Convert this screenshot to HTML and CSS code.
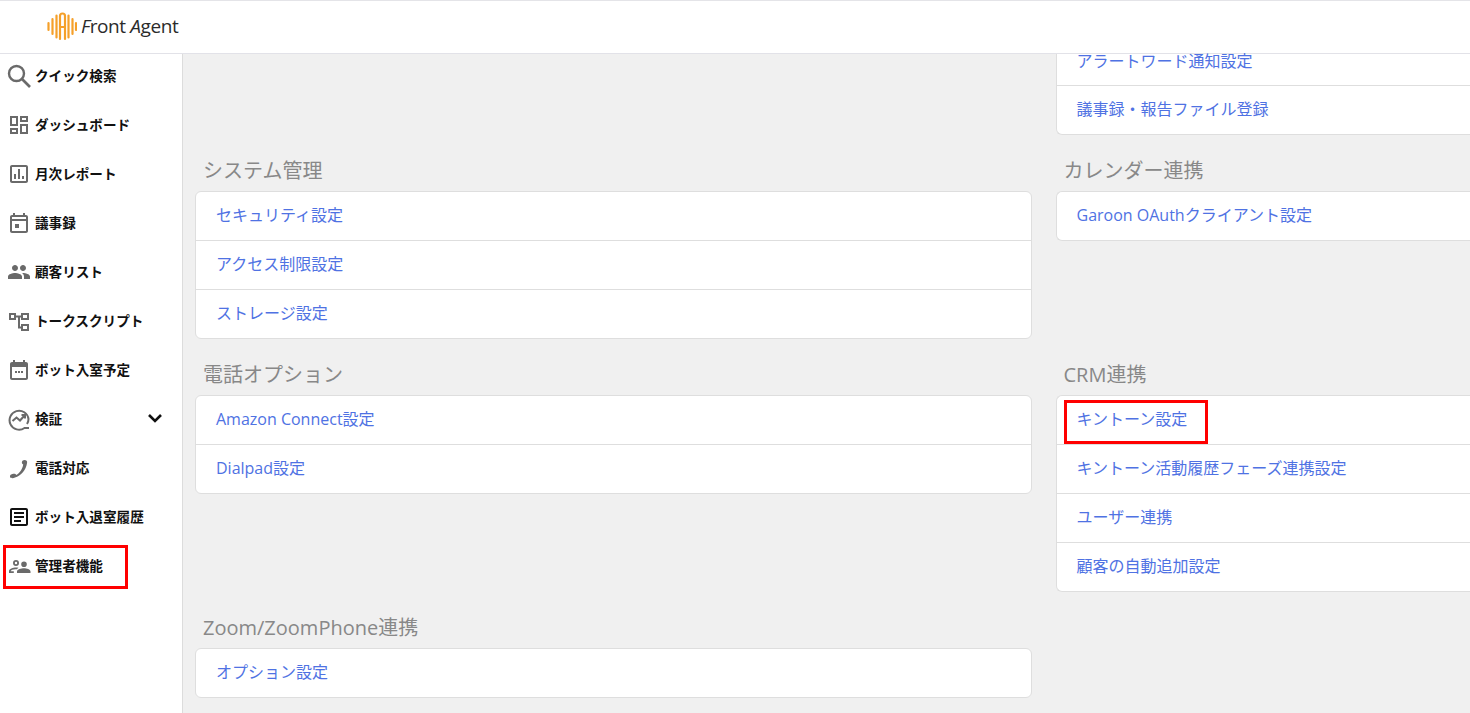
FILE: index.html
```html
<!DOCTYPE html>
<html lang="ja">
<head>
    <meta charset="UTF-8">
    <meta name="viewport" content="width=device-width, initial-scale=1.0">
    <title>Front Agent 管理者機能</title>
    <link rel="stylesheet" href="styles.css">
</head>
<body>
    <header class="topbar">
        <div class="logo">
            <svg class="logo-mark" viewBox="0 0 30 30" width="30" height="30">
                <path d="M1.500 12v7M5.500 8v15M9.500 4.500v22M13 28V5a2.500 2.500 0 0 1 5 0v23M13 16h5M21.500 4.500v22M25.500 8v15M29 12v7"/>
            </svg>
            <span class="logo-text"><i>F</i>ront <i>A</i>gent</span>
        </div>
    </header>

    <div class="layout">
        <nav class="sidebar">
            <a class="nav-item" href="#">
                <svg class="nav-icon search" viewBox="0 0 24 24"><circle cx="9.500" cy="9.500" r="7.500" fill="none" stroke="#6a6a6a" stroke-width="2.400"/><path d="M15 15l8 8" stroke="#6a6a6a" stroke-width="2.600"/></svg>
                <span>クイック検索</span>
            </a>
            <a class="nav-item" href="#">
                <svg class="nav-icon" viewBox="0 0 24 24"><path d="M19 5v2h-4V5h4M9 5v6H5V5h4m10 8v6h-4v-6h4M9 17v2H5v-2h4M21 3h-8v6h8V3zM11 3H3v10h8V3zm10 8h-8v10h8V11zm-10 4H3v6h8v-6z"/></svg>
                <span>ダッシュボード</span>
            </a>
            <a class="nav-item" href="#">
                <svg class="nav-icon" viewBox="0 0 24 24"><path d="M19 3H5c-1.100 0-2 .9-2 2v14c0 1.100.9 2 2 2h14c1.100 0 2-.9 2-2V5c0-1.100-.9-2-2-2zm0 16H5V5h14v14zM7 12h2v5H7zm4-5h2v10h-2zm4 7h2v3h-2z"/></svg>
                <span>月次レポート</span>
            </a>
            <a class="nav-item" href="#">
                <svg class="nav-icon" viewBox="0 0 24 24"><path d="M19 4h-1V2h-2v2H8V2H6v2H5c-1.100 0-2 .9-2 2v14c0 1.100.9 2 2 2h14c1.100 0 2-.9 2-2V6c0-1.100-.9-2-2-2zm0 16H5V10h14v10zm0-12H5V6h14v2zM8 13h4v4H8z"/></svg>
                <span>議事録</span>
            </a>
            <a class="nav-item" href="#">
                <svg class="nav-icon" viewBox="0 0 24 24"><path d="M16 11c1.660 0 2.990-1.340 2.990-3S17.660 5 16 5s-3 1.340-3 3 1.340 3 3 3zm-8 0c1.660 0 2.990-1.340 2.990-3S9.660 5 8 5 5 6.340 5 8s1.340 3 3 3zm0 2c-2.330 0-7 1.170-7 3.500V19h14v-2.500C15 14.170 10.330 13 8 13zm8 0c-.29 0-.62.02-.97.05 1.160.84 1.970 1.970 1.970 3.450V19h6v-2.500c0-2.330-4.670-3.500-7-3.500z"/></svg>
                <span>顧客リスト</span>
            </a>
            <a class="nav-item" href="#">
                <svg class="nav-icon" viewBox="0 0 24 24"><g fill="none" stroke="#6a6a6a" stroke-width="2"><rect x="3" y="5" width="5" height="5"/><rect x="15" y="5" width="6" height="5"/><rect x="15" y="16" width="6" height="5"/><path d="M8 7.500h7M12 7.500V18.500h3"/></g></svg>
                <span>トークスクリプト</span>
            </a>
            <a class="nav-item" href="#">
                <svg class="nav-icon" viewBox="0 0 24 24"><path d="M19 4h-1V2h-2v2H8V2H6v2H5c-1.100 0-2 .9-2 2v14c0 1.100.9 2 2 2h14c1.100 0 2-.9 2-2V6c0-1.100-.9-2-2-2zm0 16H5V9h14v11zM8 13h2v2H8zm3 0h2v2h-2zm3 0h2v2h-2z"/></svg>
                <span>ボット入室予定</span>
            </a>
            <a class="nav-item" href="#">
                <svg class="nav-icon" viewBox="0 0 24 24"><g fill="none" stroke="#6a6a6a" stroke-width="2"><path d="M22 21h-4.500A9.500 9.500 0 1 1 21.500 12c0 2-.4 3.500-1.500 5"/><path d="M5.500 14l4-3.500 3.500 3 5-5.500M14.500 8h3.500v3.500"/></g></svg>
                <span>検証</span>
                <svg class="chevron" viewBox="0 0 24 24"><path d="M6 9l6 6 6-6" fill="none" stroke="#111" stroke-width="2.600"/></svg>
            </a>
            <a class="nav-item" href="#">
                <svg class="nav-icon" viewBox="0 0 24 24"><path d="M17.500 4c1.800 0 2.900 1 2.600 2.800C19 14 14 20 8 21.500c-1.500 1-4.500 1-5-.5-.4-1.500 1-3 3.200-3.200 1.600-.2 2.800.3 3 1.200 3.500-2 6.300-6 7-10.500-1-.5-1.500-1.300-1.300-2.400.2-1.300 1.300-2.100 2.600-2.100z"/></svg>
                <span>電話対応</span>
            </a>
            <a class="nav-item" href="#">
                <svg class="nav-icon dark" viewBox="0 0 24 24"><path d="M19 5v14H5V5h14m0-2H5c-1.100 0-2 .9-2 2v14c0 1.100.9 2 2 2h14c1.100 0 2-.9 2-2V5c0-1.100-.9-2-2-2zM14 17H7v-2h7v2zm3-4H7v-2h10v2zm0-4H7V7h10v2z"/></svg>
                <span>ボット入退室履歴</span>
            </a>
            <a class="nav-item" href="#">
                <svg class="nav-icon" viewBox="0 0 24 24"><path d="M9 6a3 3 0 1 1 0 6 3 3 0 0 1 0-6zm0 1.800a1.200 1.200 0 1 0 0 2.400 1.200 1.200 0 0 0 0-2.400zM2 19v-2c0-2 4-3.500 7-3.500.8 0 1.700.1 2.500.3l-1.700 1.500c-3-.4-6 .7-6 1.700v.2h3V19zM17 7.500a2.800 2.800 0 1 1 0 5.600 2.800 2.800 0 0 1 0-5.600zM10 19v-1.500c0-2 4.500-3.200 7-3.200s6.500 1.200 6.500 3.200V19z"/></svg>
                <span>管理者機能</span>
                <i class="mark mark-nav"></i>
            </a>
        </nav>

        <main class="content">
            <div class="columns">
                <div></div>
                <section>
                    <ul class="card card-cut">
                        <li><a href="#">アラートワード通知設定</a></li>
                        <li><a href="#">議事録・報告ファイル登録</a></li>
                    </ul>
                </section>

                <section>
                    <h2>システム管理</h2>
                    <ul class="card">
                        <li><a href="#">セキュリティ設定</a></li>
                        <li><a href="#">アクセス制限設定</a></li>
                        <li><a href="#">ストレージ設定</a></li>
                    </ul>
                </section>
                <section>
                    <h2>カレンダー連携</h2>
                    <ul class="card">
                        <li><a href="#">Garoon OAuthクライアント設定</a></li>
                    </ul>
                </section>

                <section>
                    <h2>電話オプション</h2>
                    <ul class="card">
                        <li><a href="#">Amazon Connect設定</a></li>
                        <li><a href="#">Dialpad設定</a></li>
                    </ul>
                </section>
                <section>
                    <h2>CRM連携</h2>
                    <ul class="card">
                        <li><a href="#">キントーン設定</a><i class="mark mark-card"></i></li>
                        <li><a href="#">キントーン活動履歴フェーズ連携設定</a></li>
                        <li><a href="#">ユーザー連携</a></li>
                        <li><a href="#">顧客の自動追加設定</a></li>
                    </ul>
                </section>

                <section>
                    <h2>Zoom/ZoomPhone連携</h2>
                    <ul class="card">
                        <li><a href="#">オプション設定</a></li>
                    </ul>
                </section>
            </div>
        </main>
    </div>
</body>
</html>
```

FILE: styles.css
```css
/* Base */
* {
    box-sizing: border-box;
}

html, body {
    height: 100%;
}

body {
    margin: 0;
    overflow: hidden;
    background-color: #f0f0f0;
    font-family: "Open Sans", "Noto Sans CJK JP", sans-serif;
}

a {
    text-decoration: none;
}

/* Top bar */
.topbar {
    height: 54px;
    background-color: white;
    border-top: 1px solid #e4e4e8;
    border-bottom: 1px solid #e2e2e8;
    padding-left: 47px;
}

.logo {
    display: flex;
    align-items: center;
    gap: 4px;
    height: 50px;
}

.logo-mark {
    fill: none;
    stroke: #f5a02a;
    stroke-width: 2.200;
    stroke-linecap: round;
}

.logo-text {
    font-family: "Open Sans", sans-serif;
    font-size: 19px;
    letter-spacing: -0.4px;
    color: #2b2b2b;
}

/* Sidebar and content */
.layout {
    display: flex;
    height: calc(100% - 54px);
}

.sidebar {
    flex: 0 0 183px;
    background-color: white;
    border-right: 1px solid #dcdcdc;
}

.nav-item {
    position: relative;
    display: flex;
    align-items: center;
    height: 49px;
    padding: 0 20px 7px 7px;
    color: #111;
    font-family: "Noto Sans CJK JP", sans-serif;
    font-size: 13.600px;
    font-weight: 700;
}

.nav-item span {
    margin-left: 4px;
}

.nav-icon {
    flex: none;
    width: 24px;
    height: 24px;
    margin-top: 2px;
    fill: #6a6a6a;
}

.nav-icon.dark {
    fill: #111;
}

.chevron {
    width: 24px;
    height: 24px;
    margin-left: auto;
    margin-right: -5px;
}

.content {
    flex: 1;
    min-width: 0;
    padding-left: 12px;
}

.columns {
    display: grid;
    grid-template-columns: 837px 1fr;
    column-gap: 23.500px;
}

section h2 {
    margin: 22px 0 6px 8px;
    font-size: 20px;
    font-weight: 400;
    line-height: 28px;
    color: #888;
}

/* Link cards */
.card {
    margin: 0;
    padding: 0;
    list-style: none;
    background-color: white;
    border: 1px solid #dedede;
    border-radius: 6px;
}

.card li {
    position: relative;
    display: flex;
    align-items: center;
    height: 49px;
    padding: 0 0 4px 20px;
    border-top: 1px solid #dedede;
    font-size: 16px;
}

.card li:first-child {
    height: 48px;
    border-top: none;
}

.card a {
    color: #4f72e3;
}

/* The right column runs on past the window edge */
.columns section:nth-child(even) .card {
    border-right: none;
    border-radius: 6px 0 0 6px;
}

/* The first card is scrolled under the top bar */
.columns section:nth-child(even) .card-cut {
    border-top: none;
    border-radius: 0 0 0 6px;
}

.card-cut li:first-child {
    height: 31px;
    padding-bottom: 17px;
}

.card-cut li:first-child a {
    line-height: 14px;
}

/* Red annotation boxes */
.mark {
    position: absolute;
    border: 3px solid #f00;
}

.mark-nav {
    left: 3px;
    top: 1px;
    width: 125px;
    height: 44px;
}

.mark-card {
    left: 7px;
    top: 4px;
    width: 144px;
    height: 44px;
}
```
